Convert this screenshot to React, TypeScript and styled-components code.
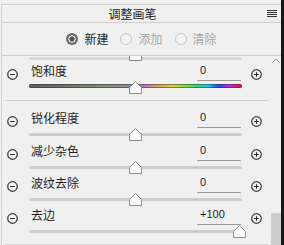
import React from "react";
import styled, { createGlobalStyle } from "styled-components";

const Global = createGlobalStyle`
  html, body { margin: 0; padding: 0; background: #f0f0f0; }
  body { font-family: "Noto Sans CJK SC", "Liberation Sans", sans-serif; }
`;

const Window = styled.div`
  width: 284px;
  height: 245px;
  box-sizing: border-box;
  padding: 4px 0 0 1px;
  border-right: 3px solid #161616;
  background: #f0f0f0;
  overflow: hidden;
  display: flex;
`;

const Panel = styled.div`
  flex: 1;
  min-width: 0;
  display: flex;
  flex-direction: column;
  border-top: 1px solid #cdcdcd;
  border-left: 1px solid #d2d2d2;
`;

const TitleBar = styled.div`
  height: 17px;
  flex: none;
  border-bottom: 1px solid #cdcdcd;
  display: flex;
  align-items: center;
`;

const Title = styled.div`
  flex: 1;
  text-align: center;
  font-size: 12px;
  line-height: 17px;
  color: #1e1e1e;
`;

const MenuButton = styled.div`
  width: 18px;
  height: 17px;
  box-sizing: border-box;
  padding-left: 4px;
  display: flex;
  flex-direction: column;
  justify-content: center;
  gap: 1px;
`;

const MenuLine = styled.span`
  display: block;
  width: 10px;
  height: 1px;
  background: #333;
`;

const RadioRow = styled.div`
  height: 32px;
  flex: none;
  border-bottom: 1px solid #cdcdcd;
  display: flex;
  align-items: center;
  justify-content: center;
  gap: 12px;
`;

const RadioItem = styled.label<{ $disabled?: boolean }>`
  display: flex;
  align-items: center;
  gap: 6px;
  font-size: 12px;
  line-height: 16px;
  color: ${(p) => (p.$disabled ? "#a6a6a6" : "#1e1e1e")};
`;

const RadioDot = styled.span<{ $checked?: boolean }>`
  width: 12px;
  height: 12px;
  border-radius: 50%;
  box-sizing: border-box;
  ${(p) =>
    p.$checked
      ? `background: radial-gradient(circle at center, #555 0 2.4px, #f6f6f6 2.9px 3.4px, #6a6a6a 3.9px);`
      : `border: 1px solid #c4c4c4; background: #f3f3f3;`}
`;

const Body = styled.div`
  flex: 1;
  min-height: 0;
  display: flex;
`;

const Content = styled.div`
  flex: 1;
  min-width: 0;
  overflow: hidden;
  display: flex;
  flex-direction: column;
`;

const ScrollBar = styled.div`
  width: 10px;
  flex: none;
  display: flex;
  flex-direction: column;
  justify-content: space-between;
`;

const ScrollArrow = styled.div`
  display: flex;
  justify-content: center;
  padding-top: 2px;
`;

const ScrollThumb = styled.div`
  height: 32px;
  background: #cdcdcd;
`;

const PartialRow = styled.div`
  display: grid;
  grid-template-columns: 27px 213px 29px;
  margin-top: -8px;
`;

const AdjustRow = styled.div<{ $gap: number }>`
  display: grid;
  grid-template-columns: 27px 213px 29px;
  grid-template-rows: 17px 13px;
  margin-top: ${(p) => p.$gap}px;
  flex: none;
`;

const IconCell = styled.div<{ $side: "left" | "right" }>`
  grid-row: 1;
  grid-column: ${(p) => (p.$side === "left" ? 1 : 3)};
  align-self: end;
  margin-bottom: 1px;
  margin-left: ${(p) => (p.$side === "left" ? 5 : 9)}px;
  display: flex;
`;

const Header = styled.div`
  grid-row: 1;
  grid-column: 2;
  display: flex;
  justify-content: space-between;
  align-items: flex-start;
`;

const Label = styled.span`
  padding-left: 2px;
  font-size: 12px;
  line-height: 14px;
  color: #1e1e1e;
`;

const ValueBox = styled.div`
  width: 44px;
  height: 17px;
  margin-right: 1px;
  box-sizing: border-box;
  border-bottom: 1px solid #9c9c9c;
  padding: 0 0 3px 3px;
  display: flex;
  align-items: flex-end;
  font-family: "Liberation Sans", Arial, sans-serif;
  font-size: 11px;
  line-height: 13px;
  color: #1e1e1e;
`;

const SliderBox = styled.div`
  grid-column: 2;
  position: relative;
  height: 13px;
`;

const Track = styled.div<{ $kind: "gray" | "color" | "faint"; $top: number }>`
  position: absolute;
  left: 0;
  right: 0;
  top: ${(p) => p.$top}px;
  height: ${(p) => (p.$kind === "color" ? 4 : 3)}px;
  border-radius: 2px;
  background: ${(p) =>
    p.$kind === "color"
      ? "linear-gradient(to right, #5c5c5c 0%, #6f7a6a 20%, #7f8f74 35%, #8c8898 47%, #b06fd0 53%, #d39a6a 60%, #d8d040 67%, #7ee03a 73%, #2ad47a 79%, #22c8e8 84%, #2448ee 89%, #c228e0 94%, #f01030 100%)"
      : p.$kind === "faint"
      ? "#d6d6d6"
      : "#cdcdcd"};
  box-shadow: ${(p) =>
    p.$kind === "color" ? "inset 0 0 0 1px rgba(40,40,40,0.45)" : "none"};
`;

const ThumbWrap = styled.div`
  position: absolute;
  top: 0;
  width: 13px;
  height: 13px;
  display: flex;
`;

const Separator = styled.div<{ $gap: number }>`
  height: 1px;
  flex: none;
  margin: ${(p) => p.$gap}px 3px 0 3px;
  background: #d3d3d3;
`;

const CircleIcon = ({ plus }: { plus?: boolean }) => (
  <svg width="11" height="11" viewBox="0 0 11 11">
    <circle cx="5.5" cy="5.5" r="4.8" fill="none" stroke="#3a3a3a" strokeWidth="1.2" />
    <line x1="3.2" y1="5.5" x2="7.8" y2="5.5" stroke="#2a2a2a" strokeWidth="1" />
    {plus && <line x1="5.5" y1="3.2" x2="5.5" y2="7.8" stroke="#2a2a2a" strokeWidth="1" />}
  </svg>
);

const Thumb = ({ pct }: { pct: number }) => (
  <ThumbWrap style={{ left: `calc(3px + (100% - 6px) * ${pct} - 6.5px)` }}>
    <svg width="13" height="13" viewBox="0 0 13 13">
      <polygon
        points="0.5,6.5 6.5,0.5 12.5,6.5 12.5,12.5 0.5,12.5"
        fill="#fbfbfb"
        stroke="#8c8c8c"
        strokeWidth="1"
      />
    </svg>
  </ThumbWrap>
);

type Adjust = {
  label: string;
  value: string;
  pct: number;
  kind: "gray" | "color";
  gap: number;
};

const AdjustControl = ({ a }: { a: Adjust }) => (
  <AdjustRow $gap={a.gap}>
    <IconCell $side="left">
      <CircleIcon />
    </IconCell>
    <Header>
      <Label>{a.label}</Label>
      <ValueBox>{a.value}</ValueBox>
    </Header>
    <IconCell $side="right">
      <CircleIcon plus />
    </IconCell>
    <SliderBox>
      <Track $kind={a.kind} $top={a.kind === "color" ? 3 : 5} />
      <Thumb pct={a.pct} />
    </SliderBox>
  </AdjustRow>
);

const detail: Adjust[] = [
  { label: "锐化程度", value: "0", pct: 0.5, kind: "gray", gap: 10 },
  { label: "减少杂色", value: "0", pct: 0.5, kind: "gray", gap: 3 },
  { label: "波纹去除", value: "0", pct: 0.5, kind: "gray", gap: 2 },
  { label: "去边", value: "+100", pct: 1, kind: "gray", gap: 2 },
];

export default function App() {
  return (
    <>
      <Global />
      <Window>
        <Panel>
          <TitleBar>
            <Title>调整画笔</Title>
            <MenuButton>
              <MenuLine />
              <MenuLine />
              <MenuLine />
              <MenuLine />
            </MenuButton>
          </TitleBar>
          <RadioRow>
            <RadioItem>
              <RadioDot $checked />
              新建
            </RadioItem>
            <RadioItem $disabled>
              <RadioDot />
              添加
            </RadioItem>
            <RadioItem $disabled>
              <RadioDot />
              清除
            </RadioItem>
          </RadioRow>
          <Body>
            <Content>
              <PartialRow>
                <SliderBox>
                  <Track $kind="faint" $top={9} />
                  <Thumb pct={0.5} />
                </SliderBox>
              </PartialRow>
              <AdjustControl a={{ label: "饱和度", value: "0", pct: 0.5, kind: "color", gap: 3 }} />
              <Separator $gap={6} />
              {detail.map((a) => (
                <AdjustControl key={a.label} a={a} />
              ))}
              <Separator $gap={6} />
            </Content>
            <ScrollBar>
              <ScrollArrow>
                <svg width="8" height="5" viewBox="0 0 8 5">
                  <polyline points="0.5,4.5 4,1 7.5,4.5" fill="none" stroke="#8a8a8a" strokeWidth="1" />
                </svg>
              </ScrollArrow>
              <ScrollThumb />
            </ScrollBar>
          </Body>
        </Panel>
      </Window>
    </>
  );
}
